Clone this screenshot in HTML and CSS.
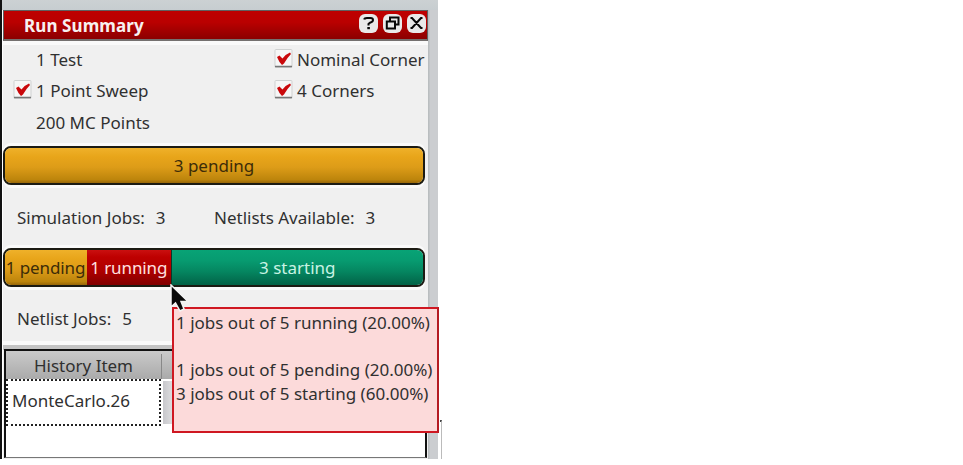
FILE: index.html
```html
<!DOCTYPE html>
<html lang="en">
<head>
<meta charset="utf-8">
<title>Run Summary</title>
<link rel="stylesheet" href="styles.css">
</head>
<body>
<svg class="defs" width="0" height="0">
  <symbol id="check" viewBox="0 0 19 19">
    <rect x="1" y="0.5" width="17" height="18" rx="1" fill="#f6f6f6" stroke="#cfd1d1"/>
    <path d="M1 17.5H18" stroke="#777" stroke-width="1.5"/>
    <path d="M3 8 L5.5 6.5 L8.5 9.5 Q11 5.5 16 3.5 L17 5 Q13 9 10 14.5 L8 16 Q5 13 3 8Z" fill="#c9080b"/>
  </symbol>
</svg>
<div class="window">
  <section class="dock">
    <header class="titlebar">
      <h1><span>Run Summary</span></h1>
      <div class="tools">
        <svg width="19" height="19" viewBox="0 0 19 19"><rect width="19" height="19" rx="6" fill="#e9e9e9"/><path d="M5.2 5.5Q5.5 4 8 4H11.5Q14 4 14 6Q14 8 11 8.7L9.5 10V11.5" fill="none" stroke="#080808" stroke-width="2"/><path d="M8.3 13h2.6v2.2H8.3z" fill="#080808"/></svg>
        <svg width="19" height="19" viewBox="0 0 19 19"><rect width="19" height="19" rx="6" fill="#e9e9e9"/><path d="M7 7V3.5H15.5V10.5H12M3.8 7.5H12V14.5H3.8Z" fill="none" stroke="#080808" stroke-width="2"/></svg>
        <svg width="19" height="19" viewBox="0 0 19 19"><rect width="19" height="19" rx="6" fill="#e9e9e9"/><path d="M3.5 4H5L14 14H15.5M15.5 4H14L5 14H3.5" fill="none" stroke="#080808" stroke-width="2"/></svg>
      </div>
    </header>
    <div class="options">
      <div class="option"><i></i><span>1 Test</span></div>
      <div class="option"><svg><use href="#check"/></svg><span>Nominal Corner</span></div>
      <div class="option"><svg><use href="#check"/></svg><span>1 Point Sweep</span></div>
      <div class="option"><svg><use href="#check"/></svg><span>4 Corners</span></div>
      <div class="option"><i></i><span>200 MC Points</span></div>
    </div>
    <div class="bar"><div class="seg pending whole">3 pending</div></div>
    <div class="stats"><span class="sim">Simulation Jobs:<b>3</b></span><span>Netlists Available:<b>3</b></span></div>
    <div class="bar"><div class="seg pending">1 pending</div><div class="seg running">1 running</div><div class="seg starting">3 starting</div></div>
    <div class="stats last"><span>Netlist Jobs:<b>5</b></span></div>
    <div class="splitter"></div>
    <div class="table">
      <div class="head"><div class="col">History Item</div></div>
      <div class="row"><div class="cell">MonteCarlo.26</div><div class="next"></div></div>
    </div>
  </section>
  <div class="tip"><p>1 jobs out of 5 running (20.00%)</p><p>&nbsp;</p><p>1 jobs out of 5 pending (20.00%)</p><p>3 jobs out of 5 starting (60.00%)</p></div>
  <svg class="pointer" width="20" height="30" viewBox="0 0 20 30"><path d="M1 1V23L5.5 19L10 27L14 25L11 17.5H18Z" fill="#080808" stroke="#f4f4f4" stroke-width="1.5"/></svg>
  <div class="edge"></div>
</div>
</body>
</html>
```
FILE: styles.css
```css
* { box-sizing: border-box; }
body {
  margin: 0;
  background: #fff;
  color: #303030;
  font: 17px/24px "Noto Sans", "Open Sans", sans-serif;
  overflow: hidden;
}
.defs { position: absolute; }
.window {
  position: relative;
  width: 438px;
  height: 459px;
  padding: 10px 10px 0 1px;
  border-left: 2px solid #111;
  background: linear-gradient(#ccd1d3, #c7cdd0) top / 100% 10px no-repeat, linear-gradient(90deg, #b9bdbf 0 1px, #cbcdd0 2px) right / 10px 100% no-repeat, #fff;
}
.dock {
  display: flex;
  flex-direction: column;
  height: 449px;
  background: #f0f0f0;
}
.titlebar {
  display: flex;
  flex: none;
  justify-content: space-between;
  height: 31px;
  padding: 3px 1px 0 20px;
  border: 1px solid #606060;
  border-bottom: 2px solid #74706f;
  background: linear-gradient(#be0000, #ba0000 40%, #8b0000);
  box-shadow: 0 4px #fafafa;
}
h1 { margin: 0; color: #f7f0f0; font-size: 17px; line-height: 24px; font-weight: 700; letter-spacing: .1px; }
.tools { display: flex; gap: 5px; }
.options {
  display: grid;
  flex: none;
  grid-template-columns: 261px 1fr;
  grid-auto-rows: 31.3px;
  padding: 7px 0 0 10px;
  height: 105px;
}
.option { display: flex; gap: 4px; line-height: 24px; white-space: nowrap; }
.option svg, .option i { flex: none; width: 19px; height: 19px; margin-top: 1px; }
.bar {
  display: flex;
  flex: none;
  width: 422px;
  height: 39px;
  border: 2px solid #1c1b13;
  border-radius: 8px;
  overflow: hidden;
  box-shadow: 0 3px #fafafa, 0 -3px #fafafa;
}
.seg { width: 20%; line-height: 36px; text-align: center; white-space: nowrap; letter-spacing: -.1px; }
.bar .seg:not(.whole):first-child { width: 82px; text-indent: -1px; }
.pending { background: linear-gradient(#efb12a 0, #e8a51a 25%, #dd9c18 55%, #bd850c 90%, #986709); color: #3d2c08; }
.bar .whole { width: 100%; letter-spacing: 0; }
.running { background: linear-gradient(#ca1010, #be0000 20%, #ae0000 60%, #820000); color: #ffe0e0; }
.starting { flex: 1; background: linear-gradient(#08a376, #079b70 30%, #058761 60%, #026347); color: #c9f3e4; border-left: 1px solid #063b2c; letter-spacing: 0; }
.stats { display: flex; flex: none; height: 63px; padding: 21px 0 0 14px; }
.stats b { margin-left: 11px; font-weight: 400; }
.sim { width: 197px; }
.last { height: 54px; padding-top: 20px; }
.splitter { flex: none; height: 9px; border-top: 4px solid #fafafa; background: #c4c4c4; }
.table { width: 423px; height: 109px; margin-left: 1px; margin-top: -1px; border: 2px solid #111; border-bottom: 1px solid #777; background: #fff; }
.head { display: flex; height: 28px; background: linear-gradient(#cacaca, #aaa); }
.col { width: 156px; margin-top: 3px; line-height: 23px; text-align: center; border-right: 1px solid #888; }
.row { display: flex; height: 47px; background: #fff; }
.cell { width: 155px; border: 2px dotted #222; padding-left: 4px; line-height: 40px; }
.next { width: 250px; margin: 2px; background: linear-gradient(90deg, #c8c8cc, #f4f4f4 20px); }
.pointer { position: absolute; left: 168px; top: 284px; }
.tip {
  position: absolute;
  left: 170px;
  top: 307px;
  width: 267px;
  height: 126px;
  padding: 2px 0 0 2px;
  border: 2px solid #cf1721;
  border-right-color: #b51b22;
  background: #fcdada;
  white-space: nowrap;
  line-height: 23.5px;
}
.tip p { margin: 0; }
.edge { position: absolute; left: 438px; top: 420px; width: 2px; height: 39px; border-right: 1px solid #bbb; border-top: 2px solid #444; }
```
